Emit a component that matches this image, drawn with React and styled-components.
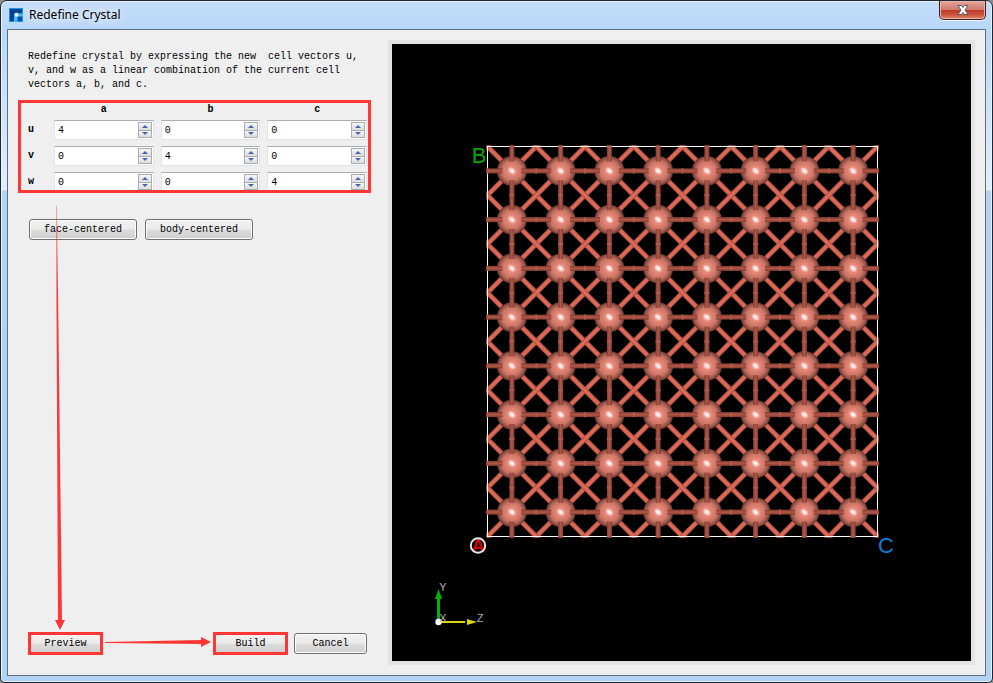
import { useState } from "react";
import styled, { createGlobalStyle } from "styled-components";

const GlobalStyle = createGlobalStyle`
  * {
    box-sizing: border-box;
  }
  body {
    margin: 0;
    background-color: #8c8c8c;
    color: black;
    font-family: "Liberation Mono", monospace;
    font-size: 10px;
    line-height: 14px;
  }
`;

const Window = styled.div`
  position: relative;
  display: flex;
  flex-direction: column;
  min-height: 100vh;
  padding: 0 6px 6px;
  border: 1px solid #1d2733;
  border-radius: 7px 7px 5px 5px;
  background: linear-gradient(#c4dcf8 0, #b7d7f8 30px, #e0edfc 180px, #e0edfc 189px, #b4d3f5 190px, #b0d2f6 100%);
  box-shadow: inset 0 0 0 1px #e9f4ff;
`;

const TitleBar = styled.header`
  display: flex;
  align-items: center;
  gap: 6px;
  height: 28px;
  padding-left: 2px;
`;

const Title = styled.h1`
  margin: 0;
  padding-right: 16px;
  font-family: "Noto Sans", sans-serif;
  font-size: 12px;
  font-weight: 400;
  line-height: 18px;
  text-shadow: 0 0 8px white, 0 0 12px white;
`;

const CloseButton = styled.button`
  display: flex;
  align-items: center;
  justify-content: center;
  align-self: flex-start;
  width: 47px;
  height: 19px;
  margin-left: auto;
  padding: 0;
  border: 1px solid #4b1a1c;
  border-top: 0;
  border-radius: 0 0 5px 5px;
  background: linear-gradient(#e3a79b 0, #d07a6b 48%, #bb3a27 50%, #c9513a 75%, #dd8a70 100%);
  box-shadow: inset 0 0 0 1px #eab3a8, 0 1px 0 #eef6ff;
`;

const Client = styled.main`
  display: flex;
  flex: 1;
  padding: 10px;
  border: 1px solid #5f6f7c;
  background-color: #efefef;
`;

const Controls = styled.section`
  position: relative;
  display: flex;
  flex-direction: column;
  flex: 0 0 370px;
  min-width: 0;
  padding: 10px 21px 11px 10px;
`;

const Description = styled.p`
  margin: 0;
  white-space: pre;
`;

const Highlight = styled.span`
  position: absolute;
  inset: ${(props) => props.$inset};
  border: 3px solid #ff3636;
  pointer-events: none;
`;

const MatrixBox = styled.div`
  position: relative;
  margin-top: 10px;
`;

const MatrixClip = styled.div`
  height: 90px;
  overflow: hidden;
`;

const Matrix = styled.table`
  border-collapse: collapse;
  table-layout: fixed;
  width: 346px;

  th,
  td {
    height: 26px;
    padding: 0 7px 0 0;
    text-align: left;
    font-weight: 700;
  }
  thead th {
    height: 15px;
    text-align: center;
  }
  th:first-child {
    width: 26px;
  }
`;

const SpinBox = styled.div`
  display: flex;
  height: 20px;
  padding: 1px;
  border: 1px solid #e2e3ea;
  border-top-color: #abadb3;
  background-color: white;
`;

const SpinInput = styled.input`
  flex: 1;
  min-width: 0;
  padding: 1px 1px 0 2px;
  border: 0;
  outline: 0;
  background: none;
  font: inherit;
  font-weight: 400;
`;

const SpinButtons = styled.div`
  display: flex;
  flex-direction: column;
  width: 14px;
  border: 1px solid #abadb3;
`;

const SpinButton = styled.button`
  display: flex;
  flex: 1;
  align-items: center;
  justify-content: center;
  min-height: 0;
  padding: 0;
  border: 0;
  background: linear-gradient(#f6f6f6, #dcdcdc);

  & + & {
    border-top: 1px solid #abadb3;
  }
`;

const ButtonRow = styled.div`
  display: flex;
  gap: 8px;
  margin-top: 27px;
  padding-left: 1px;
`;

const Footer = styled(ButtonRow)`
  gap: 7px;
  margin-top: auto;
`;

const Button = styled.button`
  position: relative;
  width: ${(props) => props.$width};
  height: 21px;
  padding: 0;
  border: 1px solid #707070;
  border-radius: 3px;
  background: linear-gradient(#f2f2f2 0, #ebebeb 49%, #dddddd 51%, #cfcfcf 100%);
  box-shadow: inset 0 0 0 1px #fcfcfc;
  color: black;
  font: inherit;
`;

const Spacer = styled.div`
  flex: 1;
`;

const Arrows = styled.svg`
  position: absolute;
  left: 0;
  bottom: 0;
  width: 370px;
  height: 625px;
  pointer-events: none;
`;

const Viewer = styled.section`
  display: flex;
  flex: 1;
  min-width: 0;
  border: 4px solid #e3e3e3;
  background-color: black;
`;

const Scene = styled.svg`
  flex: 1;
  min-width: 0;
  width: 100%;
`;

const AXES = ["a", "b", "c"];
const VECTORS = ["u", "v", "w"];

const CELLS = 8;
const STEP = 48.75;
const LEFT = 487.5;
const TOP = 146.5;
const SIZE = STEP * CELLS;

const range = (n) => Array.from({ length: n }, (_, i) => i);

function Logo() {
  return (
    <svg width="14" height="14" viewBox="0 0 14 14" aria-hidden="true">
      <rect width="14" height="14" fill="#1593e6" />
      <path d="M1 1H13V5H9L7 4L5 6V13H1Z" fill="#0a3f92" />
      <path d="M9 9H13V13H9Z" fill="#0a4fa8" />
      <path d="M5 14V7L6 5H9L10 6H14V8H9L8 9V14Z" fill="#49b8f5" />
      <circle cx="7.500" cy="6.800" r="1.900" fill="#f2fbff" />
    </svg>
  );
}

function Spin({ label, value, onChange }) {
  const step = (by) => onChange(Number(value) + by);
  return (
    <SpinBox>
      <SpinInput aria-label={label} value={value} onChange={(e) => onChange(e.target.value)} />
      <SpinButtons>
        <SpinButton aria-label={`${label} up`} onClick={() => step(1)}>
          <svg width="6" height="3"><path d="M0 3L3 0L6 3Z" fill="#4b62b0" /></svg>
        </SpinButton>
        <SpinButton aria-label={`${label} down`} onClick={() => step(-1)}>
          <svg width="6" height="3"><path d="M0 0L3 3L6 0Z" fill="#4b62b0" /></svg>
        </SpinButton>
      </SpinButtons>
    </SpinBox>
  );
}

function Diagonal({ x, y, dir }) {
  const r = STEP / 2;
  return (
    <g transform={`translate(${x} ${y}) rotate(${dir * 45})`}>
      <rect x={-r * 1.4} y="-2.500" width={r * 2.8} height="5" fill="url(#rod)" />
    </g>
  );
}

function Crystal() {
  const corners = range(CELLS + 1);
  const centers = range(CELLS);
  return (
    <g>
      <g clipPath="url(#cell)">
        {corners.map((row) =>
          corners.map((col) => {
            const top = (row + col) % 2 ? 1 : -1;
            const x = LEFT + col * STEP;
            const y = TOP + row * STEP;
            return (
              <g key={`${row}-${col}`}>
                <Diagonal x={x} y={y} dir={-top} />
                <Diagonal x={x} y={y} dir={top} />
              </g>
            );
          })
        )}
      </g>
      {centers.map((row) =>
        centers.map((col) => (
          <g
            key={`${row}-${col}`}
            transform={`translate(${LEFT + (col + 0.5) * STEP} ${TOP + (row + 0.5) * STEP})`}
          >
            <circle r="15" fill="url(#atom)" />
            <ellipse rx="5" ry="3.500" transform="rotate(40)" fill="url(#shine)" />
          </g>
        ))
      )}
      <rect x={LEFT} y={TOP} width={SIZE} height={SIZE} fill="none" stroke="white" shapeRendering="crispEdges" />
      {centers.map((line) =>
        corners.map((i) => {
          const start = i === 0 ? -1 : i * STEP - 15;
          const end = i === CELLS ? SIZE + 1 : i * STEP + 15;
          const across = (line + 0.5) * STEP - 2.5;
          return (
            <g key={`${line}-${i}`}>
              <rect x={LEFT + start} y={TOP + across} width={end - start} height="5" fill="url(#bondH)" />
              <rect x={LEFT + across} y={TOP + start} width="5" height={end - start} fill="url(#bondV)" />
              <rect x={LEFT + i * STEP - 1} y={TOP + across} width="2" height="5" fill="#b45847" />
              <rect x={LEFT + across} y={TOP + i * STEP - 1} width="5" height="2" fill="#b45847" />
            </g>
          );
        })
      )}
    </g>
  );
}

function CrystalView() {
  return (
    <Scene viewBox="392 44 579 617" role="img" aria-label="Crystal">
      <defs>
        <radialGradient id="atom">
          <stop offset="0" stopColor="#f3a193" />
          <stop offset="0.35" stopColor="#e28474" />
          <stop offset="0.65" stopColor="#cb7465" />
          <stop offset="0.88" stopColor="#915045" />
          <stop offset="1" stopColor="#59302a" />
        </radialGradient>
        <radialGradient id="shine">
          <stop offset="0" stopColor="#ffffff" />
          <stop offset="0.5" stopColor="#ffe4df" stopOpacity="0.85" />
          <stop offset="1" stopColor="#f6b3a8" stopOpacity="0" />
        </radialGradient>
        <linearGradient id="rod" x2="0" y2="1">
          <stop offset="0" stopColor="#a84c3e" />
          <stop offset="0.4" stopColor="#e06c59" />
          <stop offset="0.6" stopColor="#e06c59" />
          <stop offset="1" stopColor="#a84c3e" />
        </linearGradient>
        <linearGradient id="bondH" x2="0" y2="1">
          <stop offset="0" stopColor="#7d3c31" />
          <stop offset="0.5" stopColor="#b35747" />
          <stop offset="1" stopColor="#7d3c31" />
        </linearGradient>
        <linearGradient id="bondV">
          <stop offset="0" stopColor="#7d3c31" />
          <stop offset="0.5" stopColor="#b35747" />
          <stop offset="1" stopColor="#7d3c31" />
        </linearGradient>
        <clipPath id="cell">
          <rect x={LEFT - 1} y={TOP - 1} width={SIZE + 2} height={SIZE + 2} />
        </clipPath>
      </defs>
      <Crystal />
      <g fontFamily="Liberation Sans, sans-serif" fontSize="22" textAnchor="middle">
        <text x="479" y="163" fill="#00a800">B</text>
        <text x="886" y="553" fill="#0a7fd8">C</text>
        <text x="478" y="552" fill="#e00000" stroke="#e00000" strokeWidth="0.500" fontSize="18">A</text>
      </g>
      <circle cx="478" cy="545.500" r="7.200" fill="none" stroke="#e8e8e8" strokeWidth="2" />
      <path d="M438.500 621V598" stroke="#00b400" strokeWidth="3" />
      <path d="M435 599L438.500 589L442 599Z" fill="#00b400" />
      <path d="M440 622H465" stroke="#d8d800" strokeWidth="2" />
      <path d="M467 619L477 622L467 625Z" fill="#d8d800" />
      <circle cx="438.500" cy="622" r="3.200" fill="white" />
      <g fontFamily="Liberation Sans, sans-serif" fontSize="11" fill="#b0b0b0" textAnchor="middle">
        <text x="443" y="591">Y</text>
        <text x="443" y="622">X</text>
        <text x="480" y="622">Z</text>
      </g>
    </Scene>
  );
}

function App() {
  const [matrix, setMatrix] = useState([
    [4, 0, 0],
    [0, 4, 0],
    [0, 0, 4],
  ]);

  const change = (row, col, value) =>
    setMatrix(matrix.map((line, i) => line.map((n, j) => (i === row && j === col ? value : n))));

  return (
    <Window>
      <GlobalStyle />
      <TitleBar>
        <Logo />
        <Title>Redefine Crystal</Title>
        <CloseButton aria-label="Close">
          <svg width="12" height="10" viewBox="0 0 12 10">
            <path d="M1 .5H4.500L6 2.500L7.500 .5H11L8 5L11 9.500H7.500L6 7.500L4.500 9.500H1L4 5Z" fill="white" stroke="#535666" />
          </svg>
        </CloseButton>
      </TitleBar>
      <Client>
        <Controls>
          <Description>
            {"Redefine crystal by expressing the new  cell vectors u,\nv, and w as a linear combination of the current cell\nvectors a, b, and c."}
          </Description>
          <MatrixBox>
            <MatrixClip>
              <Matrix>
                <thead>
                  <tr>
                    <th />
                    {AXES.map((axis) => <th key={axis} scope="col">{axis}</th>)}
                  </tr>
                </thead>
                <tbody>
                  {VECTORS.map((vector, row) => (
                    <tr key={vector}>
                      <th scope="row">{vector}</th>
                      {AXES.map((axis, col) => (
                        <td key={axis}>
                          <Spin
                            label={`${vector} ${axis}`}
                            value={matrix[row][col]}
                            onChange={(value) => change(row, col, value)}
                          />
                        </td>
                      ))}
                    </tr>
                  ))}
                </tbody>
              </Matrix>
            </MatrixClip>
            <Highlight $inset="-2px -4px -1px -10px" />
          </MatrixBox>
          <ButtonRow>
            <Button $width="108px">face-centered</Button>
            <Button $width="108px">body-centered</Button>
          </ButtonRow>
          <Footer>
            <Button $width="73px">Preview<Highlight $inset="-2px" /></Button>
            <Spacer />
            <Button $width="73px">Build<Highlight $inset="-2px" /></Button>
            <Button $width="73px">Cancel</Button>
          </Footer>
          <Arrows viewBox="18 40 370 625">
            <defs>
              <linearGradient id="fade" gradientUnits="userSpaceOnUse" x1="0" y1="206" x2="0" y2="300">
                <stop offset="0" stopColor="#ff3636" stopOpacity="0.400" />
                <stop offset="1" stopColor="#ff3636" />
              </linearGradient>
            </defs>
            <path d="M56 206H57L62 620H65L60 630L55 620H58Z" fill="url(#fade)" />
            <path d="M105 642L201 640V637L211 642L201 647V644L105 643Z" fill="#ff3636" />
          </Arrows>
        </Controls>
        <Viewer>
          <CrystalView />
        </Viewer>
      </Client>
    </Window>
  );
}

export default App;
